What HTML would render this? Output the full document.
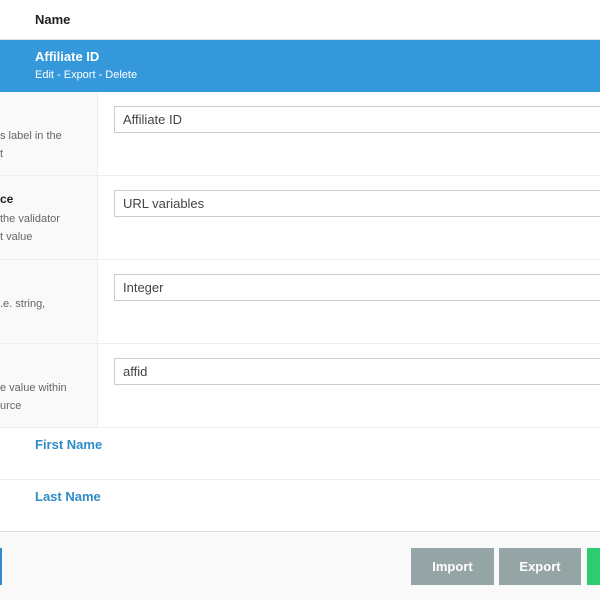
<!DOCTYPE html>
<html><head><style>
*{margin:0;padding:0;box-sizing:border-box}
body{width:600px;height:600px;overflow:hidden;background:#fff;font-family:"Liberation Sans",sans-serif;position:relative;color:#333}
.a{position:absolute}
.hdr{left:0;top:0;width:600px;height:40px;border-bottom:1px solid #e1e1e1}
.sel{left:0;top:40px;width:600px;height:52px;background:#3498db;color:#fff}
.lc{left:0;width:98px;background:#f9f9f9;border-right:1px solid #eee}
.row{left:0;width:600px;border-bottom:1px solid #eee}
.inp{left:114px;width:500px;height:27px;border:1px solid #ccc;background:#fff;font-size:13px;color:#444;padding:5px 8px}
.sm{font-size:11px;color:#666;line-height:18px}
.b{font-size:12px;font-weight:bold;color:#222}
.ln{font-size:13px;font-weight:bold;color:#2e8cc8}
.btn{top:548px;height:37px;background:#95a5a6;color:#fff;font-weight:bold;font-size:13px;text-align:center;line-height:37px}
</style></head><body>
<div class="a hdr"><div class="a" style="left:35px;top:12px;font-size:13px;font-weight:bold;color:#222">Name</div></div>
<div class="a sel"><div class="a" style="left:35px;top:9px;font-size:13px;font-weight:bold">Affiliate ID</div><div class="a" style="left:35px;top:29px;font-size:11px">Edit - Export - Delete</div></div>

<div class="a row" style="top:92px;height:84px"></div>
<div class="a lc" style="top:92px;height:83px"><div class="a sm" style="left:0;top:35px;white-space:nowrap">s label in the<br>t</div></div>
<div class="a inp" style="top:106px">Affiliate ID</div>

<div class="a row" style="top:176px;height:84px"></div>
<div class="a lc" style="top:176px;height:83px"><div class="a b" style="left:0;top:16px">ce</div><div class="a sm" style="left:0;top:34px;white-space:nowrap"> the validator<br>t value</div></div>
<div class="a inp" style="top:190px">URL variables</div>

<div class="a row" style="top:260px;height:84px"></div>
<div class="a lc" style="top:260px;height:83px"><div class="a sm" style="left:0;top:35px;white-space:nowrap">.e. string,</div></div>
<div class="a inp" style="top:274px">Integer</div>

<div class="a row" style="top:344px;height:84px"></div>
<div class="a lc" style="top:344px;height:83px"><div class="a sm" style="left:0;top:35px;white-space:nowrap">e value within<br>urce</div></div>
<div class="a inp" style="top:358px">affid</div>

<div class="a row" style="top:428px;height:52px"><div class="a ln" style="left:35px;top:9px">First Name</div></div>
<div class="a row" style="top:480px;height:52px;border-bottom:1px solid #ddd"><div class="a ln" style="left:35px;top:9px">Last Name</div></div>

<div class="a" style="left:0;top:533px;width:600px;height:67px;background:#f9f9f9"></div>
<div class="a" style="left:0;top:548px;width:2px;height:37px;background:#2e8cc8"></div>
<div class="a btn" style="left:411px;width:83px">Import</div>
<div class="a btn" style="left:499px;width:82px">Export</div>
<div class="a btn" style="left:587px;width:20px;background:#2ecc71"></div>
</body></html>
